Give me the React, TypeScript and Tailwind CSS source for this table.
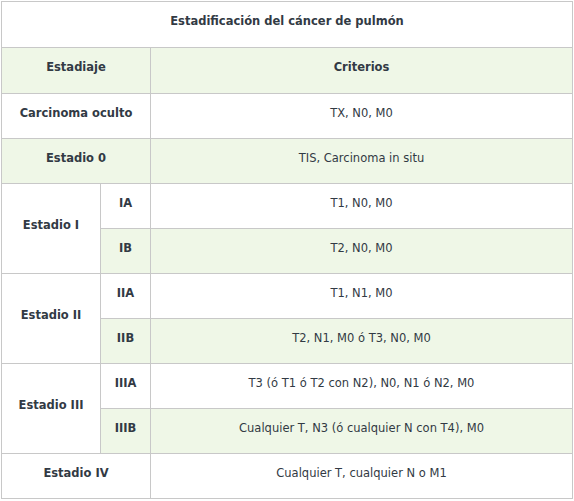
import React from "react";

const G = "bg-[#eff7e7]";
const td = "border border-[#c8c8c8] align-middle text-center pt-[1px] pb-[8px] px-2";

export default function App() {
  return (
    <div className="bg-white w-[574px] h-[501px] pt-[1px] pl-[1px]" style={{ fontFamily: '"DejaVu Sans", Verdana, sans-serif' }}>
      <table className="border-collapse w-[572px] text-[11.5px] leading-[18px] text-[#323a44]">
        <colgroup>
          <col className="w-[99px]" />
          <col className="w-[50px]" />
          <col />
        </colgroup>
        <tbody>
          <tr className="h-[46px]">
            <td colSpan={3} className={`${td} font-bold`}>Estadificación del cáncer de pulmón</td>
          </tr>
          <tr className={`h-[46px] ${G}`}>
            <td colSpan={2} className={`${td} font-bold`}>Estadiaje</td>
            <td className={`${td} font-bold`}>Criterios</td>
          </tr>
          <tr className="h-[45px]">
            <td colSpan={2} className={`${td} font-bold`}>Carcinoma oculto</td>
            <td className={td}>TX, N0, M0</td>
          </tr>
          <tr className={`h-[45px] ${G}`}>
            <td colSpan={2} className={`${td} font-bold`}>Estadio 0</td>
            <td className={td}>TIS, Carcinoma in situ</td>
          </tr>
          <tr className="h-[45px]">
            <td rowSpan={2} className={`${td} font-bold bg-white`}>Estadio I</td>
            <td className={`${td} font-bold`}>IA</td>
            <td className={td}>T1, N0, M0</td>
          </tr>
          <tr className={`h-[45px] ${G}`}>
            <td className={`${td} font-bold`}>IB</td>
            <td className={td}>T2, N0, M0</td>
          </tr>
          <tr className="h-[45px]">
            <td rowSpan={2} className={`${td} font-bold bg-white`}>Estadio II</td>
            <td className={`${td} font-bold`}>IIA</td>
            <td className={td}>T1, N1, M0</td>
          </tr>
          <tr className={`h-[45px] ${G}`}>
            <td className={`${td} font-bold`}>IIB</td>
            <td className={td}>T2, N1, M0 ó T3, N0, M0</td>
          </tr>
          <tr className="h-[45px]">
            <td rowSpan={2} className={`${td} font-bold bg-white`}>Estadio III</td>
            <td className={`${td} font-bold`}>IIIA</td>
            <td className={td}>T3 (ó T1 ó T2 con N2), N0, N1 ó N2, M0</td>
          </tr>
          <tr className={`h-[45px] ${G}`}>
            <td className={`${td} font-bold`}>IIIB</td>
            <td className={td}>Cualquier T, N3 (ó cualquier N con T4), M0</td>
          </tr>
          <tr className="h-[45px]">
            <td colSpan={2} className={`${td} font-bold`}>Estadio IV</td>
            <td className={td}>Cualquier T, cualquier N o M1</td>
          </tr>
        </tbody>
      </table>
    </div>
  );
}
